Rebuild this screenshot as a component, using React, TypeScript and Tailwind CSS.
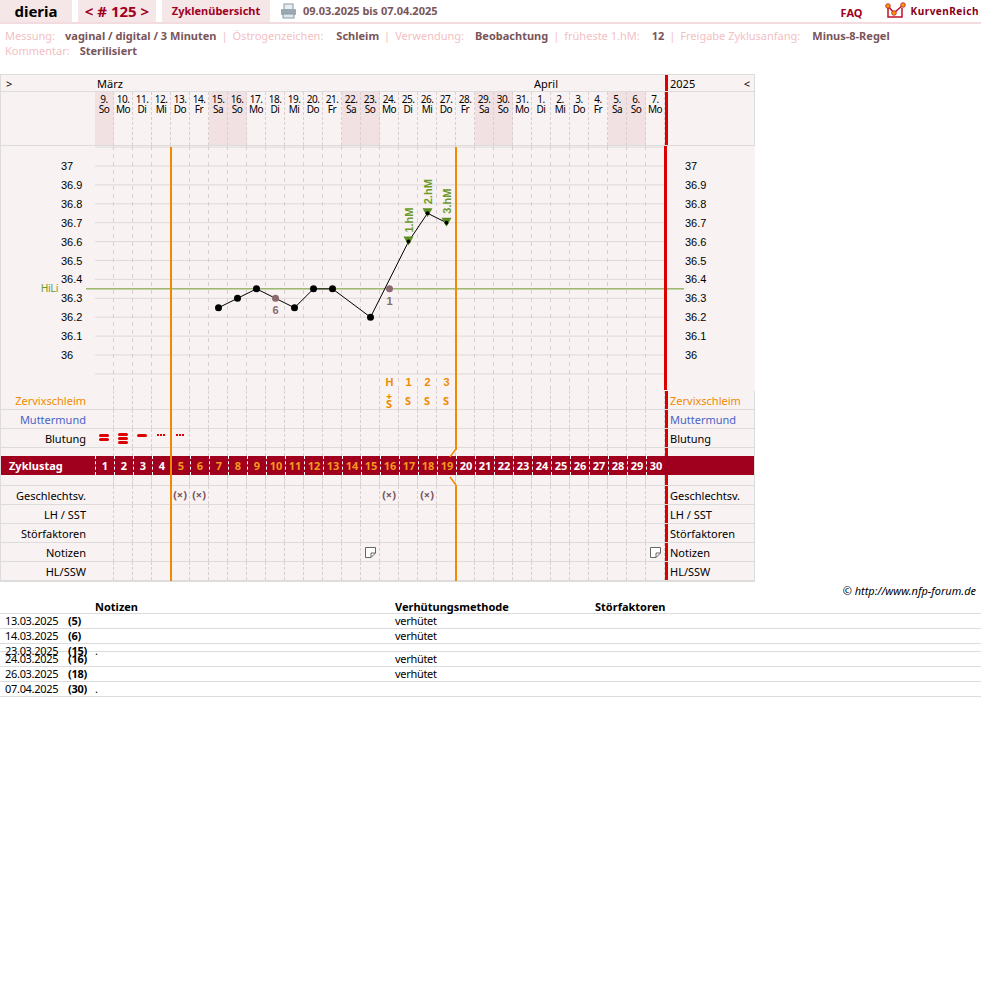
import React from "react";

const days = [
  ["9.", "So"], ["10.", "Mo"], ["11.", "Di"], ["12.", "Mi"], ["13.", "Do"], ["14.", "Fr"], ["15.", "Sa"], ["16.", "So"],
  ["17.", "Mo"], ["18.", "Di"], ["19.", "Mi"], ["20.", "Do"], ["21.", "Fr"], ["22.", "Sa"], ["23.", "So"], ["24.", "Mo"],
  ["25.", "Di"], ["26.", "Mi"], ["27.", "Do"], ["28.", "Fr"], ["29.", "Sa"], ["30.", "So"], ["31.", "Mo"], ["1.", "Di"],
  ["2.", "Mi"], ["3.", "Do"], ["4.", "Fr"], ["5.", "Sa"], ["6.", "So"], ["7.", "Mo"],
];
const weekend = new Set([1, 7, 8, 14, 15, 21, 22, 28, 29]);
const CW = 19;
const cx = (d: number) => 94 + (d - 1) * CW + 9.5;
const ty = (t: number) => 20 + (37 - t) * 189;

function Cells({ render, bg }: { render?: (d: number) => React.ReactNode; bg?: boolean }) {
  return (
    <div className="flex">
      {days.map((_, i) => (
        <div
          key={i}
          className={`w-[19px] h-full flex items-center justify-center border-r border-dashed border-[#d9cfcf] relative ${bg && weekend.has(i + 1) ? "bg-[#f2e1e3]" : ""}`}
        >
          {render ? render(i + 1) : null}
        </div>
      ))}
    </div>
  );
}

function Row({ label, labelCls = "text-black", right = true, children }: { label?: string; labelCls?: string; right?: boolean; children?: (d: number) => React.ReactNode }) {
  return (
    <div className="flex h-[19px] border-b border-[#dcdcdc] text-[11px]">
      <div className={`w-[94px] pr-[9px] text-right leading-[19px] ${labelCls}`}>{label}</div>
      <Cells render={children} />
      <div className="w-[3px] bg-[#dd0000]" />
      <div className={`flex-1 pl-[2px] leading-[19px] ${labelCls}`}>{right ? label : ""}</div>
    </div>
  );
}

function Spacer({ h }: { h: string }) {
  return (
    <div className={`flex ${h}`}>
      <div className="w-[94px]" />
      <Cells />
      <div className="w-[3px] bg-[#dd0000]" />
      <div className="flex-1" />
    </div>
  );
}

const temps: [number, number, string][] = [
  [7, 36.25, "n"], [8, 36.3, "n"], [9, 36.35, "n"], [10, 36.3, "g"], [11, 36.25, "n"], [12, 36.35, "n"],
  [13, 36.35, "n"], [15, 36.2, "n"], [16, 36.35, "g"], [17, 36.6, "t"], [18, 36.75, "t"], [19, 36.7, "t"],
];
const FF = "Liberation Sans, Arial, sans-serif";

function TempChart() {
  const line = temps.filter((t) => t[2] !== "g").map((t) => `${cx(t[0])},${ty(t[1])}`).join(" ");
  const gridYs = Array.from({ length: 13 }, (_, k) => ty(37) + (k - 1) * 18.9);
  return (
    <svg width="754" height="245" className="block">
      <rect x="0" y="0" width="754" height="245" fill="#f8f2f2" />
      {gridYs.map((y, i) => (
        <line key={i} x1="94" x2="664" y1={y} y2={y} stroke="#dedada" />
      ))}
      {days.map((_, i) => (
        <line key={i} x1={94 + (i + 1) * CW - 0.5} x2={94 + (i + 1) * CW - 0.5} y1="0" y2="245" stroke="#d9cfcf" strokeDasharray="4 4" />
      ))}
      {Array.from({ length: 11 }, (_, k) => {
        const t = (37 - k * 0.1).toFixed(1).replace(/\.0$/, "");
        const y = ty(37) + k * 18.9 + 4;
        return (
          <g key={k} fontSize="11" fill="#000" fontFamily={FF}>
            <text x="60" y={y}>{t}</text>
            <text x="684" y={y}>{t}</text>
          </g>
        );
      })}
      <line x1="85" x2="683" y1={ty(36.35)} y2={ty(36.35)} stroke="#6b9a2a" />
      <text x="40" y={ty(36.35) + 3} fontSize="10" fill="#6b9a2a" fontFamily={FF}>HiLi</text>
      <polyline points={line} fill="none" stroke="#000" strokeWidth="1" />
      {temps.map(([d, t, k], i) =>
        k === "n" ? (
          <circle key={i} cx={cx(d)} cy={ty(t)} r="3.5" fill="#000" />
        ) : k === "g" ? (
          <circle key={i} cx={cx(d)} cy={ty(t)} r="3.5" fill="#8a6a6e" />
        ) : (
          <g key={i}>
            <polygon points={`${cx(d) - 5},${ty(t) - 5} ${cx(d) + 5},${ty(t) - 5} ${cx(d)},${ty(t) + 4}`} fill="#5b8f22" />
            <circle cx={cx(d)} cy={ty(t)} r="2" fill="#000" />
          </g>
        )
      )}
      <g fontSize="11" fontWeight="bold" fill="#8a6a6e" fontFamily={FF}>
        <text x={cx(10) - 3} y={ty(36.3) + 16}>6</text>
        <text x={cx(16) - 3} y={ty(36.35) + 16}>1</text>
      </g>
      <g fontSize="11" fontWeight="bold" fill="#6b9a2a" fontFamily={FF}>
        {[[17, 36.6, "1.hM"], [18, 36.75, "2.hM"], [19, 36.7, "3.hM"]].map(([d, t, s]) => (
          <text key={s as string} transform={`translate(${cx(d as number) + 4},${ty(t as number) - 9}) rotate(-90)`}>{s}</text>
        ))}
      </g>
      <g fontSize="11" fontWeight="bold" fill="#f08a00" fontFamily={FF} textAnchor="middle">
        {["H", "1", "2", "3"].map((s, i) => (
          <text key={s} x={cx(16 + i)} y="240">{s}</text>
        ))}
      </g>
    </svg>
  );
}

const Bar = () => <div className="w-[10px] h-[3px] rounded-full bg-[#dd0000]" />;
const Dots = () => (
  <div className="flex gap-[1px] -mt-[6px]">
    <div className="w-[2px] h-[2px] bg-[#dd0000]" />
    <div className="w-[2px] h-[2px] bg-[#dd0000]" />
    <div className="w-[2px] h-[2px] bg-[#dd0000]" />
  </div>
);

export default function App() {
  const lbl = "text-[#f3c0c3]";
  const val = "text-[#7a5559] font-bold";
  const sep = <span className="text-[#f3c0c3] mx-[5px]">|</span>;
  return (
    <div className="w-[981px] h-[1002px] bg-white font-['Liberation_Sans'] text-[11px] relative">
      <div className="flex h-[24px] border-b-2 border-[#f2dcdf] items-stretch">
        <div className="w-[72px] bg-[#f5e6e8] flex items-center justify-center font-bold text-[15px] text-black">dieria</div>
        <div className="w-[78px] ml-[6px] bg-[#f5e6e8] flex items-center justify-center font-bold text-[15px] text-[#a0001e]">&lt; # 125 &gt;</div>
        <div className="w-[108px] ml-[6px] bg-[#f5e6e8] flex items-center justify-center font-bold text-[11px] text-[#a0001e]">Zyklenübersicht</div>
        <div className="ml-[10px] flex items-center gap-[6px]">
          <svg width="17" height="16" viewBox="0 0 17 16">
            <rect x="4" y="1" width="9" height="6" fill="#e8eef2" stroke="#8a9aa5" />
            <rect x="1" y="6" width="15" height="6" rx="1" fill="#9aa8b2" />
            <rect x="3" y="11" width="11" height="4" fill="#dfe6ea" stroke="#8a9aa5" />
          </svg>
          <span className="font-bold text-[#7a5559]">09.03.2025 bis 07.04.2025</span>
        </div>
        <div className="flex-1" />
        <div className="flex items-center font-bold text-[11px] text-[#a0001e] mr-[22px] mt-[4px]">FAQ</div>
        <div className="flex items-center gap-[4px] mr-[2px]">
          <svg width="22" height="18" viewBox="0 0 22 18">
            <path d="M3 6 L3 15 L17 15 L17 6" fill="none" stroke="#c0102a" strokeWidth="1.5" />
            <polyline points="3,4 9,11 18,3" fill="none" stroke="#c0102a" strokeWidth="1.5" />
            <circle cx="3" cy="4" r="2.3" fill="#f0a000" stroke="#c0102a" strokeWidth="0.8" />
            <circle cx="9" cy="11" r="2.3" fill="#f0a000" stroke="#c0102a" strokeWidth="0.8" />
            <circle cx="18" cy="3" r="2.3" fill="#f0a000" stroke="#c0102a" strokeWidth="0.8" />
          </svg>
          <span className="font-bold text-[10px] tracking-[0.5px] text-[#8a0018]">KurvenReich</span>
        </div>
      </div>
      <div className="px-[5px] pt-[4px] leading-[15px]">
        <div>
          <span className={lbl}>Messung:</span><span className={`${val} ml-[10px]`}>vaginal / digital / 3 Minuten</span>{sep}
          <span className={lbl}>Östrogenzeichen:</span><span className={`${val} ml-[13px]`}>Schleim</span>{sep}
          <span className={lbl}>Verwendung:</span><span className={`${val} ml-[11px]`}>Beobachtung</span>{sep}
          <span className={lbl}>früheste 1.hM:</span><span className={`${val} ml-[12px]`}>12</span>{sep}
          <span className={lbl}>Freigabe Zyklusanfang:</span><span className={`${val} ml-[12px]`}>Minus-8-Regel</span>
        </div>
        <div>
          <span className={lbl}>Kommentar:</span><span className={`${val} ml-[10px]`}>Sterilisiert</span>
        </div>
      </div>
      <div className="mt-[16px] w-[755px] border border-[#dcdcdc] bg-[#f8f2f2] relative">
        <div className="flex h-[17px] border-b border-[#dcdcdc] leading-[17px]">
          <div className="w-[94px] pl-[5px]">&gt;</div>
          <div className="w-[437px] pl-[2px]">März</div>
          <div className="w-[133px] pl-[2px]">April</div>
          <div className="w-[3px] bg-[#dd0000]" />
          <div className="flex-1 pl-[2px] flex justify-between pr-[4px]"><span>2025</span><span>&lt;</span></div>
        </div>
        <div className="flex h-[54px] border-b border-[#dcdcdc]">
          <div className="w-[94px]" />
          <Cells bg render={(d) => (
            <div className="absolute top-[2px] left-0 right-0 text-center text-[10px] leading-[10px] tracking-[-0.5px] text-black">
              <div>{days[d - 1][0]}</div>
              <div>{days[d - 1][1]}</div>
            </div>
          )} />
          <div className="w-[3px] bg-[#dd0000]" />
          <div className="flex-1" />
        </div>
        <div className="h-[245px] border-b border-[#dcdcdc] relative">
          <TempChart />
          <div className="absolute right-[87px] top-0 bottom-0 w-[3px] bg-[#dd0000]" />
        </div>
        <Row label="Zervixschleim" labelCls="text-[#f08a00]">
          {(d) => d >= 16 && d <= 19 ? (
            <div className="text-[#f08a00] font-bold text-[11px] leading-[10px] text-center mt-[2px]">
              {d === 16 && <div className="text-[10px] leading-[6px]">+</div>}
              <div>S</div>
            </div>
          ) : null}
        </Row>
        <Row label="Muttermund" labelCls="text-[#4a62c8]" />
        <Row label="Blutung">
          {(d) => d === 1 ? (
            <div className="flex flex-col gap-[1px] -mt-[2px]"><Bar /><Bar /></div>
          ) : d === 2 ? (
            <div className="flex flex-col gap-[1px]"><Bar /><Bar /><Bar /></div>
          ) : d === 3 ? (
            <div className="-mt-[6px]"><Bar /></div>
          ) : d === 4 || d === 5 ? (
            <Dots />
          ) : null}
        </Row>
        <Spacer h="h-[8px]" />
        <div className="flex h-[19px] bg-[#a0001e] text-[11px] font-bold">
          <div className="w-[94px] pl-[8px] leading-[19px] text-white">Zyklustag</div>
          {days.map((_, i) => (
            <div key={i} className={`w-[19px] leading-[19px] text-center border-l border-dashed border-white ${i >= 4 && i <= 18 ? "text-[#f39a1a]" : "text-white"}`}>{i + 1}</div>
          ))}
          <div className="flex-1" />
        </div>
        <Spacer h="h-[10px]" />
        <div className="border-t border-[#dcdcdc]">
          <Row label="Geschlechtsv.">
            {(d) => [5, 6, 16, 18].includes(d) ? <span className="text-[#7a5559] font-bold text-[11px]">(×)</span> : null}
          </Row>
          <Row label="LH / SST" />
          <Row label="Störfaktoren" />
          <Row label="Notizen">
            {(d) => d === 15 || d === 30 ? (
              <svg width="11" height="11" viewBox="0 0 11 11"><path d="M0.5 0.5 H10.5 V6 L6 10.5 H0.5 Z" fill="#fff" stroke="#666" /><path d="M10.5 6 H6 V10.5" fill="none" stroke="#666" /></svg>
            ) : null}
          </Row>
          <Row label="HL/SSW" />
        </div>
        <div className="absolute left-[169px] top-[72px] bottom-0 w-[2px] bg-[#f08a00]" />
        <div className="absolute left-[454px] top-[72px] h-[303px] w-[2px] bg-[#f08a00]" />
        <div className="absolute left-[454px] top-[411px] bottom-0 w-[2px] bg-[#f08a00]" />
        <svg className="absolute left-[448px] top-[372px]" width="12" height="42"><polyline points="7,0 7,2 1,10" fill="none" stroke="#f08a00" strokeWidth="1.5" /><polyline points="1,30 7,38 7,42" fill="none" stroke="#f08a00" strokeWidth="1.5" /></svg>
      </div>
      <div className="w-[976px] text-right italic text-[11px] mt-[1px]">© http://www.nfp-forum.de</div>
      <div className="text-[11px] text-black">
        <div className="flex h-[14px] border-b border-[#dcdcdc] font-bold leading-[14px]">
          <div className="w-[95px]" />
          <div className="w-[300px]">Notizen</div>
          <div className="w-[200px]">Verhütungsmethode</div>
          <div>Störfaktoren</div>
        </div>
        {[
          ["13.03.2025", "(5)", "", "verhütet", "h-[15px]"],
          ["14.03.2025", "(6)", "", "verhütet", "h-[15px]"],
          ["23.03.2025", "(15)", ".", "", "h-[8px]"],
          ["24.03.2025", "(16)", "", "verhütet", "h-[15px]"],
          ["26.03.2025", "(18)", "", "verhütet", "h-[15px]"],
          ["07.04.2025", "(30)", ".", "", "h-[15px]"],
        ].map((r, i) => (
          <div key={i} className={`flex ${r[4]} border-b border-[#dcdcdc] leading-[14px] tracking-[-0.3px]`}>
            <div className="w-[68px] pl-[5px]">{r[0]}</div>
            <div className="w-[27px] font-bold">{r[1]}</div>
            <div className="w-[300px]">{r[2]}</div>
            <div className="w-[200px]">{r[3]}</div>
          </div>
        ))}
      </div>
    </div>
  );
}
